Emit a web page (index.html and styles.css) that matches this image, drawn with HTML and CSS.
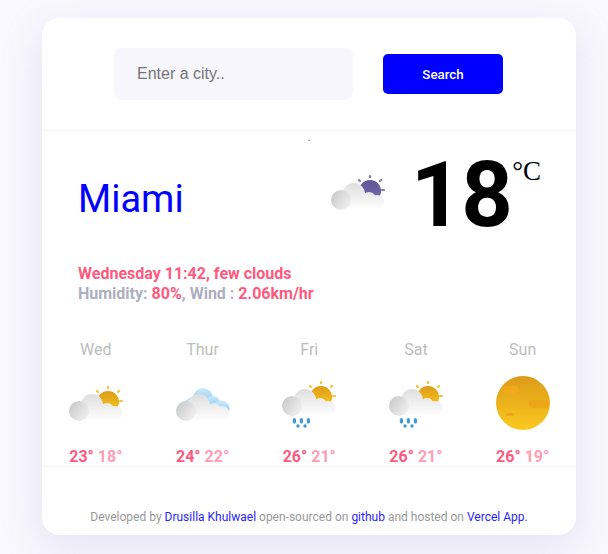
FILE: index.html
```html
<!DOCTYPE html>
<html lang="en">
<head>
<meta charset="utf-8">
<title>Weather</title>
<link rel="stylesheet" href="styles.css">
</head>
<body>
<svg class="defs" width="0" height="0" aria-hidden="true">
  <defs>
    <linearGradient id="cloudBody" gradientUnits="userSpaceOnUse" x1="0" y1="18" x2="0" y2="45"><stop offset="0" stop-color="#dedede"/><stop offset="1" stop-color="#ffffff"/></linearGradient>
    <linearGradient id="cloudLeft" x1="0" y1="0" x2="1" y2="0.700"><stop offset="0" stop-color="#c4c4c4"/><stop offset="1" stop-color="#f0f0f0"/></linearGradient>
    <linearGradient id="sunGold" x1="0" y1="0" x2="0" y2="1"><stop offset="0" stop-color="#dc9b18"/><stop offset="1" stop-color="#fbc91f"/></linearGradient>
    <linearGradient id="sunPurple" x1="0" y1="0" x2="0" y2="1"><stop offset="0" stop-color="#5f5596"/><stop offset="1" stop-color="#766ab0"/></linearGradient>
    <linearGradient id="skyBlue" x1="0" y1="0" x2="0" y2="1"><stop offset="0" stop-color="#cdeafb"/><stop offset="1" stop-color="#6fc0f2"/></linearGradient>
    <g id="cloud">
      <circle cx="23" cy="29" r="11" fill="url(#cloudBody)"/>
      <circle cx="38" cy="34" r="7" fill="url(#cloudBody)"/>
      <circle cx="46" cy="37.500" r="7.500" fill="url(#cloudBody)"/>
      <rect x="10" y="33" width="37" height="12" fill="url(#cloudBody)"/>
      <circle cx="10" cy="35" r="10" fill="url(#cloudLeft)"/>
    </g>
    <g id="rain" fill="#3f9bd4">
      <rect x="10.800" y="42" width="3.200" height="5.500" rx="1.600"/>
      <rect x="17.800" y="42" width="3.200" height="5.500" rx="1.600"/>
      <rect x="24.800" y="42" width="3.200" height="5.500" rx="1.600"/>
      <circle cx="16" cy="50" r="1.700"/>
      <circle cx="23" cy="50" r="1.700"/>
    </g>
    <g id="rays" stroke-width="2.200" stroke-linecap="round">
      <path d="M39 11v1.200M28 15l1 1M50 15l-1 1M51 25h2"/>
    </g>
    <symbol id="few-gold" viewBox="0 0 54 54">
      <use href="#rays" stroke="#f6c33c"/>
      <circle cx="39" cy="26" r="11" fill="url(#sunGold)"/>
      <use href="#cloud"/>
    </symbol>
    <symbol id="few-purple" viewBox="0 0 54 54">
      <use href="#rays" stroke="#8279bb"/>
      <circle cx="39" cy="26" r="11" fill="url(#sunPurple)"/>
      <use href="#cloud"/>
    </symbol>
    <symbol id="sky" viewBox="0 0 54 54">
      <circle cx="27" cy="22" r="10" fill="url(#skyBlue)"/>
      <circle cx="37" cy="27" r="7" fill="url(#skyBlue)"/>
      <circle cx="45" cy="33" r="8.500" fill="url(#skyBlue)"/>
      <circle cx="17" cy="30" r="9" fill="url(#skyBlue)"/>
      <use href="#cloud"/>
    </symbol>
    <symbol id="rainy" viewBox="0 0 54 54">
      <g transform="translate(0 -5)">
        <use href="#rays" stroke="#f6c33c"/>
        <circle cx="39" cy="26" r="11" fill="url(#sunGold)"/>
        <use href="#cloud"/>
      </g>
      <use href="#rain"/>
    </symbol>
    <symbol id="sun" viewBox="0 0 54 54">
      <circle cx="27" cy="27" r="27" fill="url(#sunGold)"/>
      <rect x="7" y="10" width="16" height="8" rx="4" fill="#f2a81c" opacity=".9"/>
      <rect x="33" y="24" width="20" height="8" rx="4" fill="#eba418" opacity=".9"/>
      <rect x="10" y="37" width="8" height="3" rx="1.500" fill="#ea9c18" opacity=".8"/>
    </symbol>
  </defs>
</svg>
<main class="card">
  <form class="search">
    <input class="search-input" type="text" placeholder="Enter a city..">
    <button class="search-btn" type="button">Search</button>
  </form>
  <section class="current">
    <div class="dot">.</div>
    <div class="hero">
      <h1 class="city">Miami</h1>
      <div class="reading">
        <svg class="icon icon-main"><use href="#few-purple"/></svg>
        <div class="temp">18<span class="unit">°C</span></div>
      </div>
    </div>
    <div class="details">
      <p class="hot">Wednesday 11:42, few clouds</p>
      <p class="muted">Humidity: <span class="hot">80%</span>, Wind : <span class="hot">2.06km/hr</span></p>
    </div>
    <div class="forecast">
      <div class="day"><div class="name">Wed</div><svg class="icon"><use href="#few-gold"/></svg><div class="range"><span class="hi">23°</span> <span class="lo">18°</span></div></div>
      <div class="day"><div class="name">Thur</div><svg class="icon"><use href="#sky"/></svg><div class="range"><span class="hi">24°</span> <span class="lo">22°</span></div></div>
      <div class="day"><div class="name">Fri</div><svg class="icon"><use href="#rainy"/></svg><div class="range"><span class="hi">26°</span> <span class="lo">21°</span></div></div>
      <div class="day"><div class="name">Sat</div><svg class="icon"><use href="#rainy"/></svg><div class="range"><span class="hi">26°</span> <span class="lo">21°</span></div></div>
      <div class="day"><div class="name">Sun</div><svg class="icon"><use href="#sun"/></svg><div class="range"><span class="hi">26°</span> <span class="lo">19°</span></div></div>
    </div>
  </section>
  <footer class="foot">Developed by <a href="#">Drusilla Khulwael</a> open-sourced on <a href="#">github</a> and hosted on <a href="#">Vercel App.</a></footer>
</main>
</body>
</html>
```
FILE: styles.css
```css
* { box-sizing: border-box; }
html, body { height: 100%; }
body {
  margin: 0;
  padding: 18px 32px 0 42px;
  background: #f9f8fe;
  font-family: Roboto, sans-serif;
  overflow: hidden;
}
.defs { display: block; height: 0; }
.card {
  width: 534px;
  height: 517px;
  background: #fff;
  border-radius: 18px;
  box-shadow: 0 12px 40px rgba(165, 158, 205, .24);
  display: flex;
  flex-direction: column;
}
.search {
  height: 113px;
  flex: none;
  border-bottom: 1px solid #f6f5fd;
  padding: 30px 73px 0 72px;
  display: flex;
  align-items: flex-start;
  gap: 30px;
}
.search-input {
  width: 239px;
  height: 52px;
  border: 0;
  border-radius: 8px;
  background: #f7f6fd;
  padding: 0 23px;
  font: 16px "Liberation Sans", sans-serif;
  outline: none;
}
.search-input::placeholder { color: #757575; opacity: 1; }
.search-btn {
  width: 120px;
  height: 40px;
  margin-top: 6px;
  border: 0;
  border-radius: 5px;
  background: #0000ff;
  color: #fff;
  font: 500 13.33px Roboto, sans-serif;
}
.current { flex: none; height: 336px; border-bottom: 1px solid #f6f5fd; }
.dot { height: 12px; text-align: center; font-size: 12px; line-height: 12px; color: #666; }
.hero {
  height: 90px;
  display: flex;
  justify-content: space-between;
  align-items: center;
  padding: 0 35px 0 36px;
  margin-top: 8px;
}
.city { margin: 6px 0 0; font-size: 38px; font-weight: 400; color: #0000ff; line-height: 44px; }
.reading { display: flex; align-items: center; gap: 26px; }
.icon { display: block; width: 54px; height: 54px; }
.icon-main { margin-bottom: 8px; }
.temp { font-size: 90px; font-weight: 700; letter-spacing: -1px; color: #000; line-height: 90px; position: relative; padding-right: 29px; }
.unit {
  position: absolute;
  right: 0;
  top: 4px;
  letter-spacing: 0;
  font: 400 27px/32px "Liberation Serif", serif;
}
.details { padding-left: 36px; margin-top: 23px; font-size: 16px; font-weight: 700; line-height: 20px; }
.details p { margin: 0; }
.hot { color: #ff5a7e; }
.muted { color: #aeaec0; }
.forecast { display: grid; grid-template-columns: repeat(5, 1fr); margin-top: 36px; padding-left: .5px; text-align: center; }
.day { display: flex; flex-direction: column; align-items: center; }
.name { font-size: 16px; line-height: 20px; color: #bdbdbd; margin-bottom: 16px; }
.range { margin-top: 17px; font-size: 16px; font-weight: 700; line-height: 20px; }
.hi { color: #ff5a7e; }
.lo { color: #ff9db5; }
.foot { text-align: center; font-size: 12px; line-height: 14px; color: #999; padding-top: 43px; }
.foot a { color: #2a1fff; text-decoration: none; }
```
